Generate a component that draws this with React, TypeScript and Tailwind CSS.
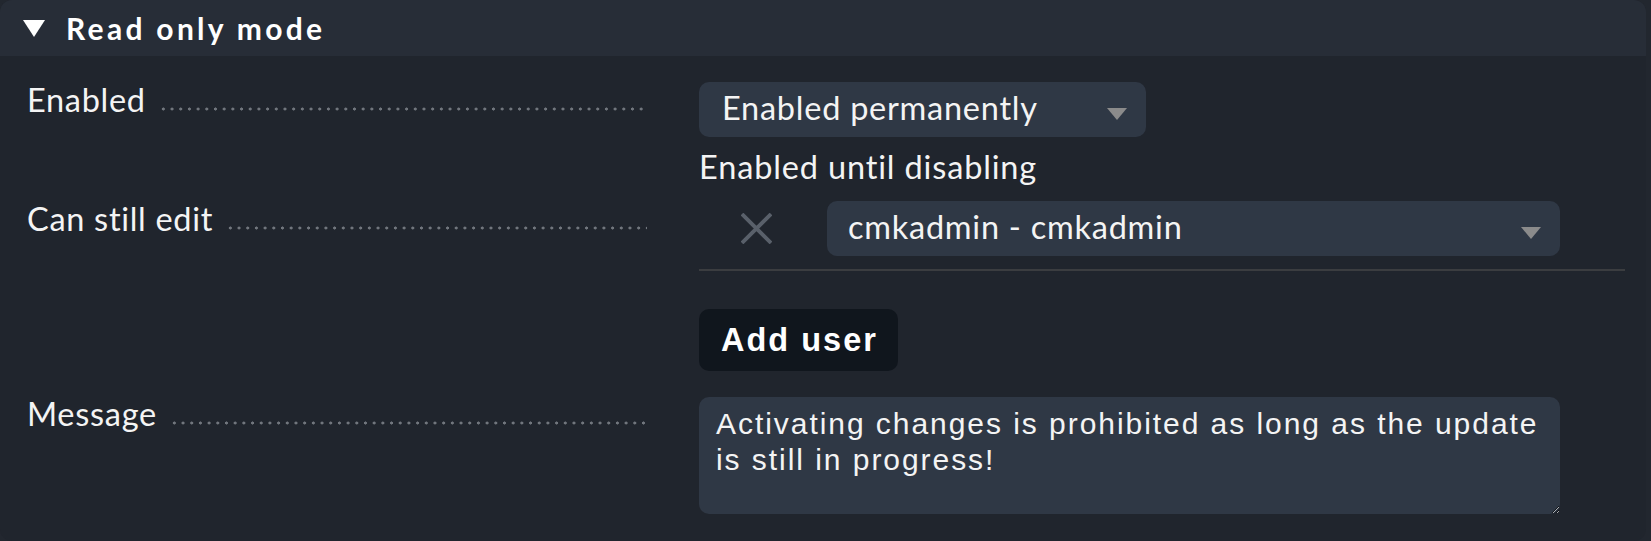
import React from 'react'

const lato = "font-['Lato','Liberation_Sans',sans-serif]"
const arial = "font-['Liberation_Sans','Arial',sans-serif]"

function Label({ text }: { text: string }) {
  return (
    <div className={`${lato} flex w-[620px] shrink-0 items-baseline text-[32.5px] leading-[39px] tracking-[0.7px] text-[#f4f4f4]`}>
      <span className="whitespace-nowrap">{text}</span>
      <span className="ml-[13px] h-[4px] flex-1 translate-y-[-1px] bg-[radial-gradient(circle,#71767d_1.3px,transparent_1.8px)] bg-[length:8.7px_4px] bg-repeat-x" />
    </div>
  )
}

function Caret() {
  return (
    <svg width="20" height="12" viewBox="0 0 20 12" className="shrink-0">
      <polygon points="0,0 20,0 10,12" fill="#8b8b8b" />
    </svg>
  )
}

function Select({ value, className, textPad }: { value: string; className: string; textPad: string }) {
  return (
    <div className={`${lato} flex h-[55px] items-start justify-between rounded-[10px] bg-[#2f3845] pr-[19px] pt-[6px] text-[32.5px] leading-[39px] tracking-[0.75px] text-[#f4f4f4] ${textPad} ${className}`}>
      <span>{value}</span>
      <span className="mt-[20px]">
        <Caret />
      </span>
    </div>
  )
}

export default function App() {
  return (
    <div className="min-h-screen bg-[#22272f]">
      <div className="h-[541px] w-[1646px] overflow-hidden rounded-[12px] bg-[#20252d]">
        <div className="flex h-[56px] items-center bg-[#272d37] pl-[23px]">
          <svg width="22" height="17" viewBox="0 0 22 17">
            <polygon points="0,0 22,0 11,17" fill="#ffffff" />
          </svg>
          <span className={`${lato} ml-[21px] text-[30px] font-bold leading-[36px] tracking-[3.3px] text-white`}>
            Read only mode
          </span>
        </div>

        <div className="pl-[27px] pt-[24px]">
          {/* Enabled */}
          <div className="flex">
            <Label text="Enabled" />
            <div className="ml-[52px] mt-[2px]">
              <Select value="Enabled permanently" className="w-[447px]" textPad="pl-[23px]" />
              <div className={`${lato} mt-[10px] text-[32.5px] leading-[39px] tracking-[0.85px] text-[#f4f4f4]`}>
                Enabled until disabling
              </div>
            </div>
          </div>

          {/* Can still edit */}
          <div className="mt-[13px] flex">
            <Label text="Can still edit" />
            <div className="ml-[52px] mt-[2px] w-[926px]">
              <div className="flex items-center">
                <div className="mr-[14px] flex w-[114px] justify-center">
                  <svg width="31" height="31" viewBox="0 0 31 31">
                    <path d="M1 1 L30 30 M30 1 L1 30" stroke="#59606a" strokeWidth="3.8" />
                  </svg>
                </div>
                <Select value="cmkadmin - cmkadmin" className="w-[733px]" textPad="pl-[21px]" />
              </div>
              <div className="mt-[13px] h-[2px] bg-[#3b3d40]" />
              <button
                className={`${arial} mt-[38px] h-[62px] rounded-[10px] bg-[#10161d] pl-[22px] pr-[20px] text-[32.5px] font-bold tracking-[2px] text-white`}
              >
                Add user
              </button>
            </div>
          </div>

          {/* Message */}
          <div className="mt-[23px] flex">
            <Label text="Message" />
            <div className="ml-[52px] mt-[3px]">
              <textarea
                defaultValue="Activating changes is prohibited as long as the update is still in progress!"
                className={`${arial} block h-[117px] w-[861px] rounded-[10px] bg-[#2f3845] px-[17px] pt-[9px] text-[30px] leading-[36px] tracking-[1.95px] text-[#f4f4f4] outline-none`}
              />
            </div>
          </div>
        </div>
      </div>
    </div>
  )
}
